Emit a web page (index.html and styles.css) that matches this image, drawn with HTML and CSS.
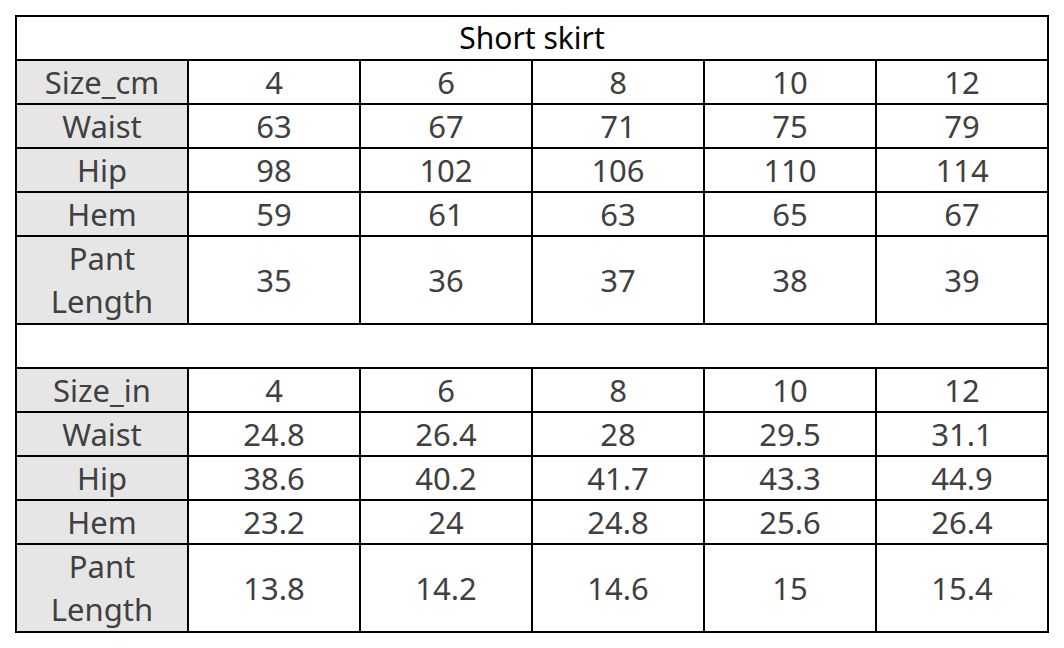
FILE: index.html
```html
<!DOCTYPE html>
<html>
<head>
<meta charset="utf-8">
<link rel="stylesheet" href="styles.css">
</head>
<body>
<table class="size-table">
  <colgroup>
    <col class="c-label"><col class="c-val"><col class="c-val"><col class="c-val"><col class="c-val"><col class="c-val">
  </colgroup>
  <tr><td class="title" colspan="6">Short skirt</td></tr>
  <tr><td class="label">Size_cm</td><td>4</td><td>6</td><td>8</td><td>10</td><td>12</td></tr>
  <tr><td class="label">Waist</td><td>63</td><td>67</td><td>71</td><td>75</td><td>79</td></tr>
  <tr><td class="label">Hip</td><td>98</td><td>102</td><td>106</td><td>110</td><td>114</td></tr>
  <tr><td class="label">Hem</td><td>59</td><td>61</td><td>63</td><td>65</td><td>67</td></tr>
  <tr class="tall"><td class="label">Pant<br>Length</td><td>35</td><td>36</td><td>37</td><td>38</td><td>39</td></tr>
  <tr><td class="blank" colspan="6">&nbsp;</td></tr>
  <tr><td class="label">Size_in</td><td>4</td><td>6</td><td>8</td><td>10</td><td>12</td></tr>
  <tr><td class="label">Waist</td><td>24.8</td><td>26.4</td><td>28</td><td>29.5</td><td>31.1</td></tr>
  <tr><td class="label">Hip</td><td>38.6</td><td>40.2</td><td>41.7</td><td>43.3</td><td>44.9</td></tr>
  <tr><td class="label">Hem</td><td>23.2</td><td>24</td><td>24.8</td><td>25.6</td><td>26.4</td></tr>
  <tr class="tall"><td class="label">Pant<br>Length</td><td>13.8</td><td>14.2</td><td>14.6</td><td>15</td><td>15.4</td></tr>
</table>
</body>
</html>
```
FILE: styles.css
```css
html, body {
  margin: 0;
  padding: 0;
  background: #ffffff;
}
body {
  padding: 15px;
}
.size-table {
  border-collapse: collapse;
  table-layout: fixed;
  width: 1034px;
  font-family: "Noto Sans", "Open Sans", sans-serif;
  font-size: 31px;
  color: #404040;
}
.c-label { width: 172px; }
.c-val { width: 172px; }
.size-table td {
  border: 2px solid #000;
  height: 42px;
  padding: 0;
  text-align: center;
  vertical-align: middle;
  line-height: 42px;
  box-sizing: border-box;
}
.size-table tr.tall td {
  height: 86px;
  line-height: 43px;
}
.size-table td.label {
  background: #e7e6e6;
}
.size-table td.title {
  color: #000;
  font-size: 30px;
}
```
